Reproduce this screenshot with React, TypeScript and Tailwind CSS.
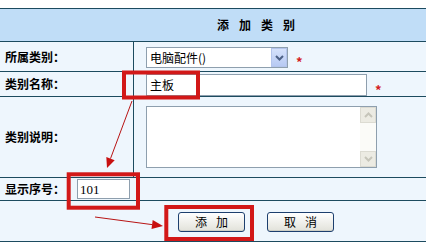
import React from 'react';

const line = 'border-[#1c4b5f]';

function Label({ text }: { text: string }) {
  return <span className="font-bold text-[12px] text-black leading-none">{text}</span>;
}

function Star({ className }: { className: string }) {
  return <span className={`text-[#d42020] font-bold text-[13px] leading-none ${className}`}>*</span>;
}

function XpButton({ chars }: { chars: string[] }) {
  return (
    <button className="w-[67px] h-[20px] rounded-[3px] border border-[#1d3f6e] bg-linear-to-b from-white to-[#e2e2da] flex items-center justify-center gap-[9px] text-[12px] leading-none text-black shadow-[inset_0_-1px_0_#cfcfc5]">
      {chars.map((c) => (
        <span key={c}>{c}</span>
      ))}
    </button>
  );
}

export default function App() {
  return (
    <div className="relative w-[426px] h-[243px] bg-white overflow-hidden font-['Noto_Sans_CJK_SC',sans-serif]">
      <div className={`mt-[8px] border-t ${line}`}>
        {/* Header */}
        <div className={`h-[33px] bg-[#c0ddf7] border-b ${line} flex items-center pl-[217px]`}>
          <span className="font-bold text-[12px] tracking-[10px] text-black leading-none">添加类别</span>
        </div>

        {/* 所属类别 */}
        <div className={`h-[30px] flex bg-[#eef6fd] border-b ${line}`}>
          <div className={`w-[134px] border-r ${line} flex items-center pl-[5px]`}>
            <Label text="所属类别：" />
          </div>
          <div className="flex items-start pt-[5px] pl-[12px]">
            <div className="w-[142px] h-[21px] border border-[#8e9fae] bg-white flex items-center">
              <span className="flex-1 pl-[3px] text-[12px] leading-none text-black">电脑配件()</span>
              <div className="w-[16px] h-[19px] bg-linear-to-b from-[#d5e2fb] to-[#b7c9f3] border border-[#b4c5ec] flex items-center justify-center">
                <svg width="9" height="6" viewBox="0 0 9 6">
                  <polyline points="1,1 4.5,4.5 8,1" fill="none" stroke="#4d6186" strokeWidth="2" />
                </svg>
              </div>
            </div>
            <Star className="ml-[8px] mt-[8px]" />
          </div>
        </div>

        {/* 类别名称 */}
        <div className={`h-[25px] flex bg-[#eef6fd] border-b ${line}`}>
          <div className={`w-[134px] border-r ${line} flex items-center pl-[5px]`}>
            <Label text="类别名称：" />
          </div>
          <div className="flex items-start pt-[2px] pl-[12px]">
            <div className="w-[221px] h-[22px] border border-[#8e9fae] bg-white flex items-center pl-[3px] text-[12px] leading-none text-black">
              主板
            </div>
            <Star className="ml-[8px] mt-[9px]" />
          </div>
        </div>

        {/* 类别说明 */}
        <div className={`h-[81px] flex bg-[#eef6fd] border-b ${line}`}>
          <div className={`w-[134px] border-r ${line} flex items-center pl-[5px]`}>
            <Label text="类别说明：" />
          </div>
          <div className="flex items-start pt-[9px] pl-[12px]">
            <div className="w-[231px] h-[62px] border border-[#8e9fae] bg-white flex justify-end">
              <div className="w-[16px] h-full bg-[#fbfbf8] flex flex-col justify-between">
                <div className="h-[16px] bg-[#ecebe3] border border-[#dcdbd2] flex items-center justify-center">
                  <svg width="9" height="6" viewBox="0 0 9 6">
                    <polyline points="1,5 4.5,1.5 8,5" fill="none" stroke="#c6c5ba" strokeWidth="2" />
                  </svg>
                </div>
                <div className="h-[16px] bg-[#ecebe3] border border-[#dcdbd2] flex items-center justify-center">
                  <svg width="9" height="6" viewBox="0 0 9 6">
                    <polyline points="1,1 4.5,4.5 8,1" fill="none" stroke="#c6c5ba" strokeWidth="2" />
                  </svg>
                </div>
              </div>
            </div>
          </div>
        </div>

        {/* 显示序号 */}
        <div className={`h-[23px] flex items-center bg-[#eef6fd] border-b ${line} pl-[5px]`}>
          <Label text="显示序号：" />
          <div className="ml-[12px] w-[53px] h-[20px] border border-[#8e9fae] bg-white flex items-center pl-[2px] font-['Liberation_Serif',serif] text-[13px] leading-none text-black">
            101
          </div>
        </div>

        {/* Buttons */}
        <div className={`h-[41px] flex items-start gap-[22px] pt-[11px] pl-[178px] bg-[#eef6fd] border-b ${line}`}>
          <XpButton chars={['添', '加']} />
          <XpButton chars={['取', '消']} />
        </div>
      </div>

      {/* Annotations */}
      <svg className="absolute inset-0 pointer-events-none" width="426" height="243" viewBox="0 0 426 243">
        <rect x="124" y="72.5" width="74" height="25" fill="none" stroke="#d21818" strokeWidth="4" />
        <rect x="68.7" y="174.3" width="69.3" height="33.4" fill="none" stroke="#d21818" strokeWidth="4" />
        <rect x="166.3" y="207" width="85.7" height="32" fill="none" stroke="#d21818" strokeWidth="4" />

        <line x1="132" y1="101" x2="110.5" y2="158.6" stroke="#b81414" strokeWidth="1" />
        <polygon points="107,168 114.7,160.2 106.3,157" fill="#c81010" />

        <line x1="95" y1="217" x2="152" y2="224.6" stroke="#b81414" strokeWidth="1" />
        <polygon points="163,226 151.5,229.1 152.7,220.1" fill="#c81010" />
      </svg>
    </div>
  );
}
